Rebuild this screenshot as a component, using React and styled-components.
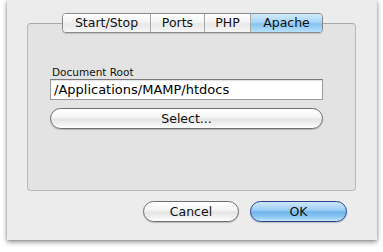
import React from "react";
import styled, { createGlobalStyle } from "styled-components";

const Global = createGlobalStyle`
  html, body { margin: 0; padding: 0; background: #ffffff; }
  body { font-family: "DejaVu Sans", "Liberation Sans", sans-serif; width: 383px; height: 252px; overflow: hidden; }
`;

const Sheet = styled.div`
  margin-left: 7px;
  width: 370px;
  height: 240px;
  background: #ececec;
  box-shadow: 0 2px 5px rgba(0,0,0,0.45), 0 0 2px rgba(0,0,0,0.2);
  display: flex;
  flex-direction: column;
  box-sizing: border-box;
  padding-top: 13px;
`;

const TabBar = styled.div`
  display: flex;
  align-self: flex-start;
  margin-left: 55px;
  height: 20px;
  margin-bottom: -10px;
  position: relative;
  z-index: 1;
  border: 1px solid #8a8a8a;
  border-radius: 4px;
  overflow: hidden;
  box-sizing: border-box;
  box-shadow: 0 1px 1px rgba(0,0,0,0.15);
`;

const Tab = styled.div`
  width: ${p => p.w}px;
  box-sizing: border-box;
  display: flex;
  align-items: center;
  justify-content: center;
  font-size: 12.5px;
  color: #111;
  border-left: ${p => (p.first ? "none" : "1px solid #a8a8a8")};
  background: ${p =>
    p.active
      ? "linear-gradient(#d2ebfb 0%, #a9d6f6 45%, #86c3f1 55%, #b6e1fb 100%)"
      : "linear-gradient(#ffffff 0%, #f4f4f4 45%, #e8e8e8 55%, #f6f6f6 100%)"};
  padding-bottom: 1px;
`;

const Group = styled.div`
  margin-left: 20px;
  width: 329px;
  height: 168px;
  box-sizing: border-box;
  background: #e3e3e3;
  border: 1px solid #b9b9b9;
  border-top-color: #a9a9a9;
  border-radius: 4px;
  padding: 42px 0 0 22px;
  display: flex;
  flex-direction: column;
`;

const Label = styled.div`
  font-size: 10.5px;
  color: #111;
  margin-left: 2px;
  height: 12px;
  line-height: 12px;
  margin-bottom: 1px;
`;

const Field = styled.div`
  width: 273px;
  height: 21px;
  box-sizing: border-box;
  background: #fff;
  border: 1px solid #9b9b9b;
  border-top-color: #7a7a7a;
  box-shadow: inset 0 1px 1px rgba(0,0,0,0.12);
  font-size: 13px;
  line-height: 19px;
  padding-left: 3px;
  color: #000;
`;

const PillButton = styled.div`
  width: ${p => p.w}px;
  height: 21px;
  box-sizing: border-box;
  border-radius: 11px;
  border: 1px solid ${p => (p.primary ? "#2b3f8f" : "#6e6e6e")};
  display: flex;
  align-items: center;
  justify-content: center;
  font-size: 12.5px;
  color: #111;
  padding-bottom: 1px;
  background: ${p =>
    p.primary
      ? "linear-gradient(#cde8fb 0%, #9fd0f4 40%, #6fb4ec 55%, #8fcaf4 80%, #c2e6fd 100%)"
      : "linear-gradient(#ffffff 0%, #f6f6f6 40%, #e6e6e6 55%, #f2f2f2 80%, #ffffff 100%)"};
  box-shadow: 0 1px 1px rgba(0,0,0,0.2);
`;

const SelectRow = styled.div`
  margin-top: 8px;
`;

const Footer = styled.div`
  display: flex;
  justify-content: flex-end;
  gap: 11px;
  margin-top: 10px;
  padding-right: 30px;
`;

export default function App() {
  return (
    <>
      <Global />
      <Sheet>
        <TabBar>
          <Tab first w={87}>Start/Stop</Tab>
          <Tab w={54}>Ports</Tab>
          <Tab w={46}>PHP</Tab>
          <Tab active w={72}>Apache</Tab>
        </TabBar>
        <Group>
          <Label>Document Root</Label>
          <Field>/Applications/MAMP/htdocs</Field>
          <SelectRow>
            <PillButton w={273}>Select...</PillButton>
          </SelectRow>
        </Group>
        <Footer>
          <PillButton w={96}>Cancel</PillButton>
          <PillButton primary w={97}>OK</PillButton>
        </Footer>
      </Sheet>
    </>
  );
}
